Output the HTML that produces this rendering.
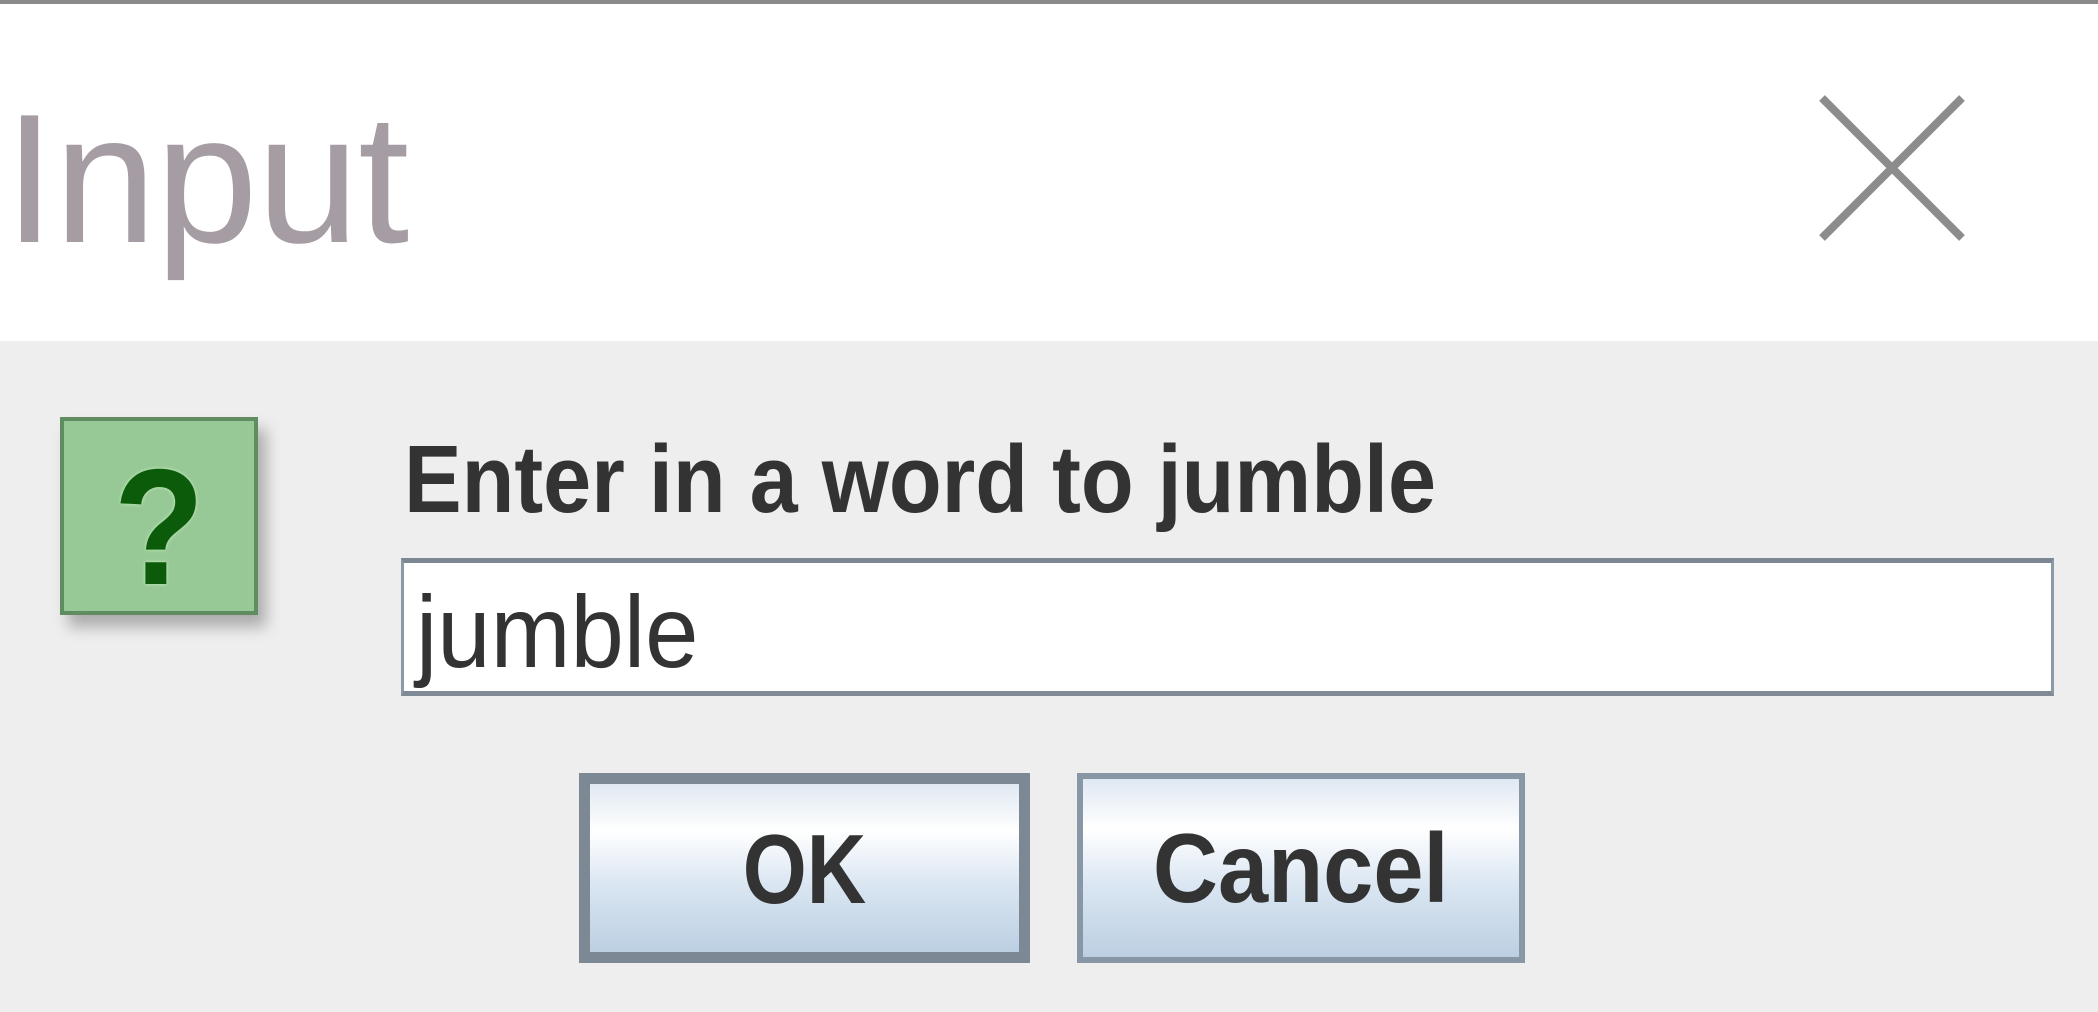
<!DOCTYPE html>
<html><head><meta charset="utf-8"><style>
html,body{margin:0;padding:0;width:2098px;height:1012px;overflow:hidden;background:#eeeeee;font-family:"Liberation Sans",sans-serif;}
.title{position:absolute;left:0;top:0;width:2098px;height:341px;background:#fff;border-top:4px solid #8a8a8a;box-sizing:border-box;}
.t{position:absolute;left:4px;top:82px;font-size:184px;color:#a59da3;line-height:1;letter-spacing:-1px;}
.x{position:absolute;left:1816px;top:88px;}
.icon{position:absolute;left:60px;top:417px;width:198px;height:198px;box-sizing:border-box;background:#97c996;border:4px solid #5f8d5f;box-shadow:8px 12px 14px rgba(0,0,0,0.28);}
.q{position:absolute;left:0;top:24px;width:190px;text-align:center;font-size:165px;font-weight:bold;color:#0b5b0b;line-height:1;text-shadow:0 0 4px #c8f0c0;transform:scaleX(0.9);}
.lbl{position:absolute;left:404px;top:432px;font-size:96px;font-weight:bold;color:#333;line-height:1;transform-origin:0 0;transform:scaleX(0.9);white-space:nowrap;}
.tf{position:absolute;left:401px;top:558px;width:1653px;height:138px;box-sizing:border-box;background:#fff;border:3px solid #8c99a6;border-top:5px solid #7d8793;border-bottom:5px solid #7f8a96;}
.tv{position:absolute;left:12px;top:18px;font-size:102px;color:#333;line-height:1;transform-origin:0 0;transform:scaleX(0.94);}
.btn{position:absolute;top:773px;height:190px;box-sizing:border-box;background:linear-gradient(#dfe8f2 0%,#ffffff 28%,#dae6f2 60%,#bccfe2 100%);text-align:center;font-weight:bold;font-size:98px;color:#333;}
.btn span{display:inline-block;transform:scaleX(0.84);line-height:170px;}
.ok{left:579px;width:451px;border:11px solid #7c8893;}
.cn{left:1077px;width:448px;border:6px solid #8797a6;}
.cn span{line-height:178px;transform:scaleX(0.92);}
</style></head><body>
<div class="title"><div class="t">Input</div>
<svg class="x" width="152" height="152" viewBox="0 0 152 152"><path d="M6 6L146 146M146 6L6 146" stroke="#8c8c8c" stroke-width="8" fill="none"/></svg></div>
<div class="icon"><div class="q">?</div></div>
<div class="lbl">Enter in a word to jumble</div>
<div class="tf"><div class="tv">jumble</div></div>
<div class="btn ok"><span>OK</span></div>
<div class="btn cn"><span>Cancel</span></div>
</body></html>
